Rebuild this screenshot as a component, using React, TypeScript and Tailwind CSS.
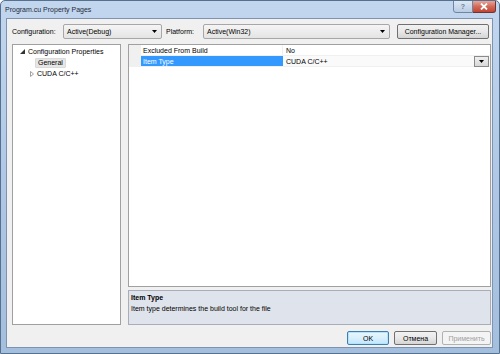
import React from "react";

const font = { fontFamily: '"Liberation Sans", Arial, sans-serif' };

function Arrow() {
  return (
    <svg width="5" height="3" viewBox="0 0 5 3" className="shrink-0">
      <path d="M0 0H5L2.5 3Z" fill="#000" />
    </svg>
  );
}

function Combo({ text, w }: { text: string; w: string }) {
  return (
    <div
      className={`${w} h-[15px] flex items-center justify-between pl-[3px] pr-[4px] border border-[#a7a7a7] rounded-[2px] bg-gradient-to-b from-[#f5f5f5] to-[#e4e4e4]`}
    >
      <span>{text}</span>
      <Arrow />
    </div>
  );
}

export default function App() {
  return (
    <div
      className="w-[500px] h-[354px] flex flex-col border border-[#56708f] rounded-t-[5px] bg-gradient-to-b from-[#c2d6ee] via-[#b0c8e5] to-[#a4bedd] text-[7px] leading-none text-black overflow-hidden"
      style={font}
    >
      {/* Title bar */}
      <div className="h-[17px] flex items-start justify-between pl-[4px] pr-[3px]">
        <span className="mt-[5px] text-[7px] text-[#1e2a3a]">Program.cu Property Pages</span>
        <div className="flex -mt-px">
          <div className="w-[20px] h-[13px] flex items-center justify-center border border-[#6e86a3] rounded-bl-[3px] bg-gradient-to-b from-[#dde8f4] to-[#b9cce3] text-[7px] font-bold text-[#6a7e96]">
            ?
          </div>
          <div className="w-[23px] h-[13px] flex items-center justify-center border border-l-0 border-[#6e3434] rounded-br-[3px] bg-gradient-to-b from-[#e8a699] via-[#d16a59] to-[#c2432f]">
            <svg width="8" height="7" viewBox="0 0 8 7">
              <path d="M1 0.5L7 6.5M7 0.5L1 6.5" stroke="#fff" strokeWidth="1.8" />
            </svg>
          </div>
        </div>
      </div>

      {/* Client area */}
      <div className="flex-1 ml-[5px] mr-[6px] mb-[5px] border border-[#7d93b0] bg-[#f0f0f0] flex flex-col pl-[5px] pr-[1px] pt-[4px] pb-[2px]">
        {/* Top row */}
        <div className="h-[16px] flex items-center">
          <span className="w-[51px]">Configuration:</span>
          <Combo text="Active(Debug)" w="w-[99px]" />
          <span className="w-[37px] ml-[4px]">Platform:</span>
          <Combo text="Active(Win32)" w="w-[187px]" />
          <div className="ml-[7px] w-[92px] h-[15px] flex items-center justify-center border border-[#707070] rounded-[2px] bg-gradient-to-b from-[#f2f2f2] via-[#e8e8e8] to-[#d5d5d5]">
            Configuration Manager...
          </div>
        </div>

        {/* Panels */}
        <div className="mt-[5px] h-[281px] flex">
          {/* Tree */}
          <div className="w-[109px] border border-[#a0a0a0] bg-white pt-px flex flex-col">
            <div className="h-[11px] flex items-center">
              <svg width="5" height="5" viewBox="0 0 5 5" className="ml-[7px]">
                <path d="M5 0V5H0Z" fill="#333" />
              </svg>
              <span className="ml-[3px]">Configuration Properties</span>
            </div>
            <div className="h-[11px] flex items-center">
              <span className="ml-[22px] px-[2px] h-[10px] flex items-center bg-[#e6e6e6] border border-[#dadada] rounded-[1px]">
                General
              </span>
            </div>
            <div className="h-[11px] flex items-center">
              <svg width="4" height="6" viewBox="0 0 4 6" className="ml-[17px]">
                <path d="M0.5 0.5L3.5 3L0.5 5.5Z" fill="none" stroke="#8a8a8a" strokeWidth="0.8" />
              </svg>
              <span className="ml-[3px]">CUDA C/C++</span>
            </div>
          </div>

          {/* Right panel */}
          <div className="ml-[7px] w-[363px] flex flex-col">
            <div className="flex-1 border border-[#a0a0a0] bg-white flex flex-col">
              <div className="h-[11px] flex items-center border-b border-[#f0f0f0]">
                <div className="w-[12px] h-full bg-[#f0f0f0]" />
                <div className="w-[142px] h-full flex items-center pl-[2px] border-r border-[#f0f0f0]">
                  Excluded From Build
                </div>
                <div className="pl-[3px]">No</div>
              </div>
              <div className="h-[11px] flex items-center border-b border-[#f0f0f0] bg-[#fafafa]">
                <div className="w-[12px] h-full bg-[#f0f0f0]" />
                <div className="w-[142px] h-full flex items-center pl-[2px] bg-[#3399ff] text-white">
                  Item Type
                </div>
                <div className="flex-1 pl-[3px] flex items-center justify-between pr-[1px]">
                  <span>CUDA C/C++</span>
                  <div className="w-[15px] h-[11px] flex items-center justify-center border border-[#8a8a8a] bg-gradient-to-b from-[#f0f0f0] to-[#d8d8d8]">
                    <Arrow />
                  </div>
                </div>
              </div>
            </div>
            <div className="mt-[3px] h-[35px] border border-[#a8adb7] bg-[#dfe3eb] pl-[2px] pt-[3px] flex flex-col gap-[4px]">
              <span className="font-bold">Item Type</span>
              <span>Item type determines the build tool for the file</span>
            </div>
          </div>
        </div>

        {/* Bottom buttons */}
        <div className="mt-[6px] h-[14px] flex justify-end">
          <div className="w-[42px] h-[14px] flex items-center justify-center border border-[#3c7fb1] rounded-[2px] bg-gradient-to-b from-[#eaf6fd] via-[#d9f0fc] to-[#bee6fd] shadow-[inset_0_0_0_1px_#b6e3fb]">
            OK
          </div>
          <div className="ml-[5px] w-[43px] h-[14px] flex items-center justify-center border border-[#707070] rounded-[2px] bg-gradient-to-b from-[#f2f2f2] via-[#e8e8e8] to-[#d5d5d5]">
            Отмена
          </div>
          <div className="ml-[5px] w-[49px] h-[14px] flex items-center justify-center border border-[#adb2b5] rounded-[2px] bg-[#f4f4f4] text-[#a0a0a0]">
            Применить
          </div>
        </div>
      </div>
    </div>
  );
}
